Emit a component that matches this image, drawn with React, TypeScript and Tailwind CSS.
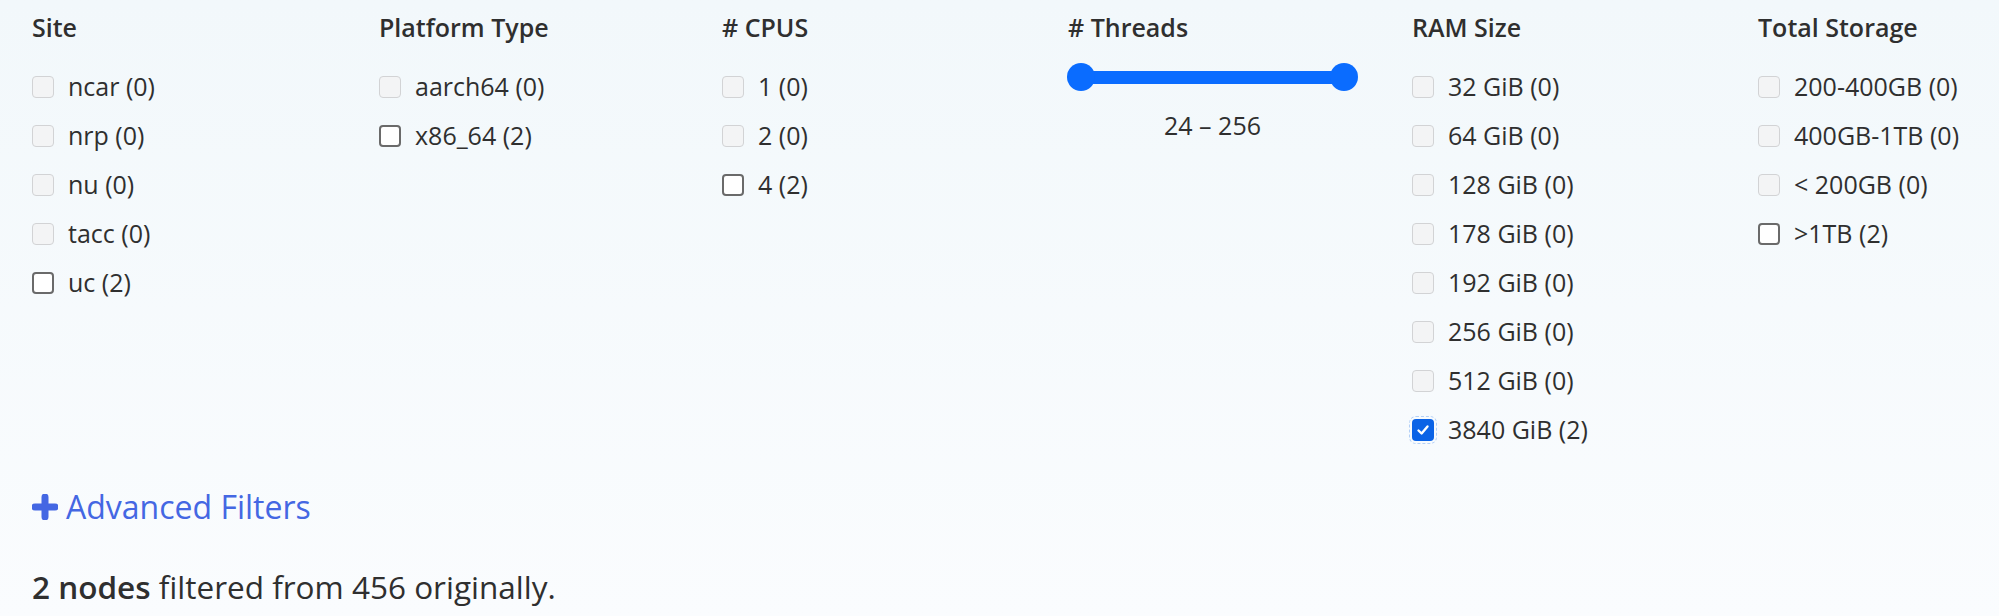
import React from "react";

type Option = { label: string; count: number; checked?: boolean };

const SITES: Option[] = [
  { label: "ncar", count: 0 },
  { label: "nrp", count: 0 },
  { label: "nu", count: 0 },
  { label: "tacc", count: 0 },
  { label: "uc", count: 2 },
];
const PLATFORMS: Option[] = [
  { label: "aarch64", count: 0 },
  { label: "x86_64", count: 2 },
];
const CPUS: Option[] = [
  { label: "1", count: 0 },
  { label: "2", count: 0 },
  { label: "4", count: 2 },
];
const RAM: Option[] = [
  { label: "32 GiB", count: 0 },
  { label: "64 GiB", count: 0 },
  { label: "128 GiB", count: 0 },
  { label: "178 GiB", count: 0 },
  { label: "192 GiB", count: 0 },
  { label: "256 GiB", count: 0 },
  { label: "512 GiB", count: 0 },
  { label: "3840 GiB", count: 2, checked: true },
];
const STORAGE: Option[] = [
  { label: "200-400GB", count: 0 },
  { label: "400GB-1TB", count: 0 },
  { label: "< 200GB", count: 0 },
  { label: ">1TB", count: 2 },
];

const Box: React.FC<{ opt: Option }> = ({ opt }) => {
  if (opt.checked) {
    return (
      <span className="w-[22px] h-[22px] rounded-[4px] bg-[#0b63e6] flex items-center justify-center outline outline-1 outline-dashed outline-[#b3d0f7] outline-offset-[2px] shrink-0">
        <svg width="14" height="14" viewBox="0 0 14 14" fill="none">
          <path d="M2.5 7.5 L5.6 10.5 L11.5 3.5" stroke="white" strokeWidth="2.4" strokeLinecap="round" strokeLinejoin="round" />
        </svg>
      </span>
    );
  }
  if (opt.count === 0) {
    return <span className="w-[22px] h-[22px] rounded-[4px] border-[1.5px] border-[#d2d3d5] bg-[#f3f4f5] shrink-0" />;
  }
  return <span className="w-[22px] h-[22px] rounded-[4px] border-2 border-[#6a6a6a] bg-white shrink-0" />;
};

const CheckList: React.FC<{ items: Option[] }> = ({ items }) => (
  <div className="mt-[18px] flex flex-col">
    {items.map((o) => (
      <label key={o.label} className="h-[49px] flex items-center gap-[14px]">
        <Box opt={o} />
        <span>
          {o.label} ({o.count})
        </span>
      </label>
    ))}
  </div>
);

const Column: React.FC<{ title: string; width: string; children: React.ReactNode }> = ({ title, width, children }) => (
  <div className={`${width} shrink-0`}>
    <h3 className="font-semibold leading-[34px]">{title}</h3>
    {children}
  </div>
);

const RangeSlider: React.FC = () => (
  <div className="w-[291px] -ml-[1px]">
    <div className="mt-[19px] h-[28px] relative flex items-center px-[14px]">
      <div className="h-[13px] w-full bg-[#0a6cff]" />
      <span className="absolute left-0 top-0 w-[28px] h-[28px] rounded-full bg-[#0a6cff]" />
      <span className="absolute right-0 top-0 w-[28px] h-[28px] rounded-full bg-[#0a6cff]" />
    </div>
    <div className="mt-[17px] leading-[34px] text-center">24 – 256</div>
  </div>
);

export default function App() {
  return (
    <div
      className="w-[1999px] h-[616px] overflow-hidden bg-gradient-to-b from-[#f2f8fb] to-[#fafcfe] text-[#2f2f2f] text-[25px] pl-[32px] pt-[10px]"
      style={{ fontFamily: '"Open Sans", "Noto Sans", sans-serif' }}
    >
      <div className="flex">
        <Column title="Site" width="w-[347px]">
          <CheckList items={SITES} />
        </Column>
        <Column title="Platform Type" width="w-[343px]">
          <CheckList items={PLATFORMS} />
        </Column>
        <Column title="# CPUS" width="w-[346px]">
          <CheckList items={CPUS} />
        </Column>
        <Column title="# Threads" width="w-[344px]">
          <RangeSlider />
        </Column>
        <Column title="RAM Size" width="w-[346px]">
          <CheckList items={RAM} />
        </Column>
        <Column title="Total Storage" width="w-[300px]">
          <CheckList items={STORAGE} />
        </Column>
      </div>

      <div className="mt-[33px] flex items-center gap-[8px] text-[32px] leading-[40px] text-[#4467e3]">
        <svg width="26" height="26" viewBox="0 0 26 26">
          <path d="M13 3 V23 M3 13 H23" stroke="#4467e3" strokeWidth="7" strokeLinecap="round" />
        </svg>
        <span>Advanced Filters</span>
      </div>

      <p className="mt-[40px] text-[31.5px] leading-[40px]">
        <span className="font-semibold">2 nodes</span> filtered from 456 originally.
      </p>
    </div>
  );
}
